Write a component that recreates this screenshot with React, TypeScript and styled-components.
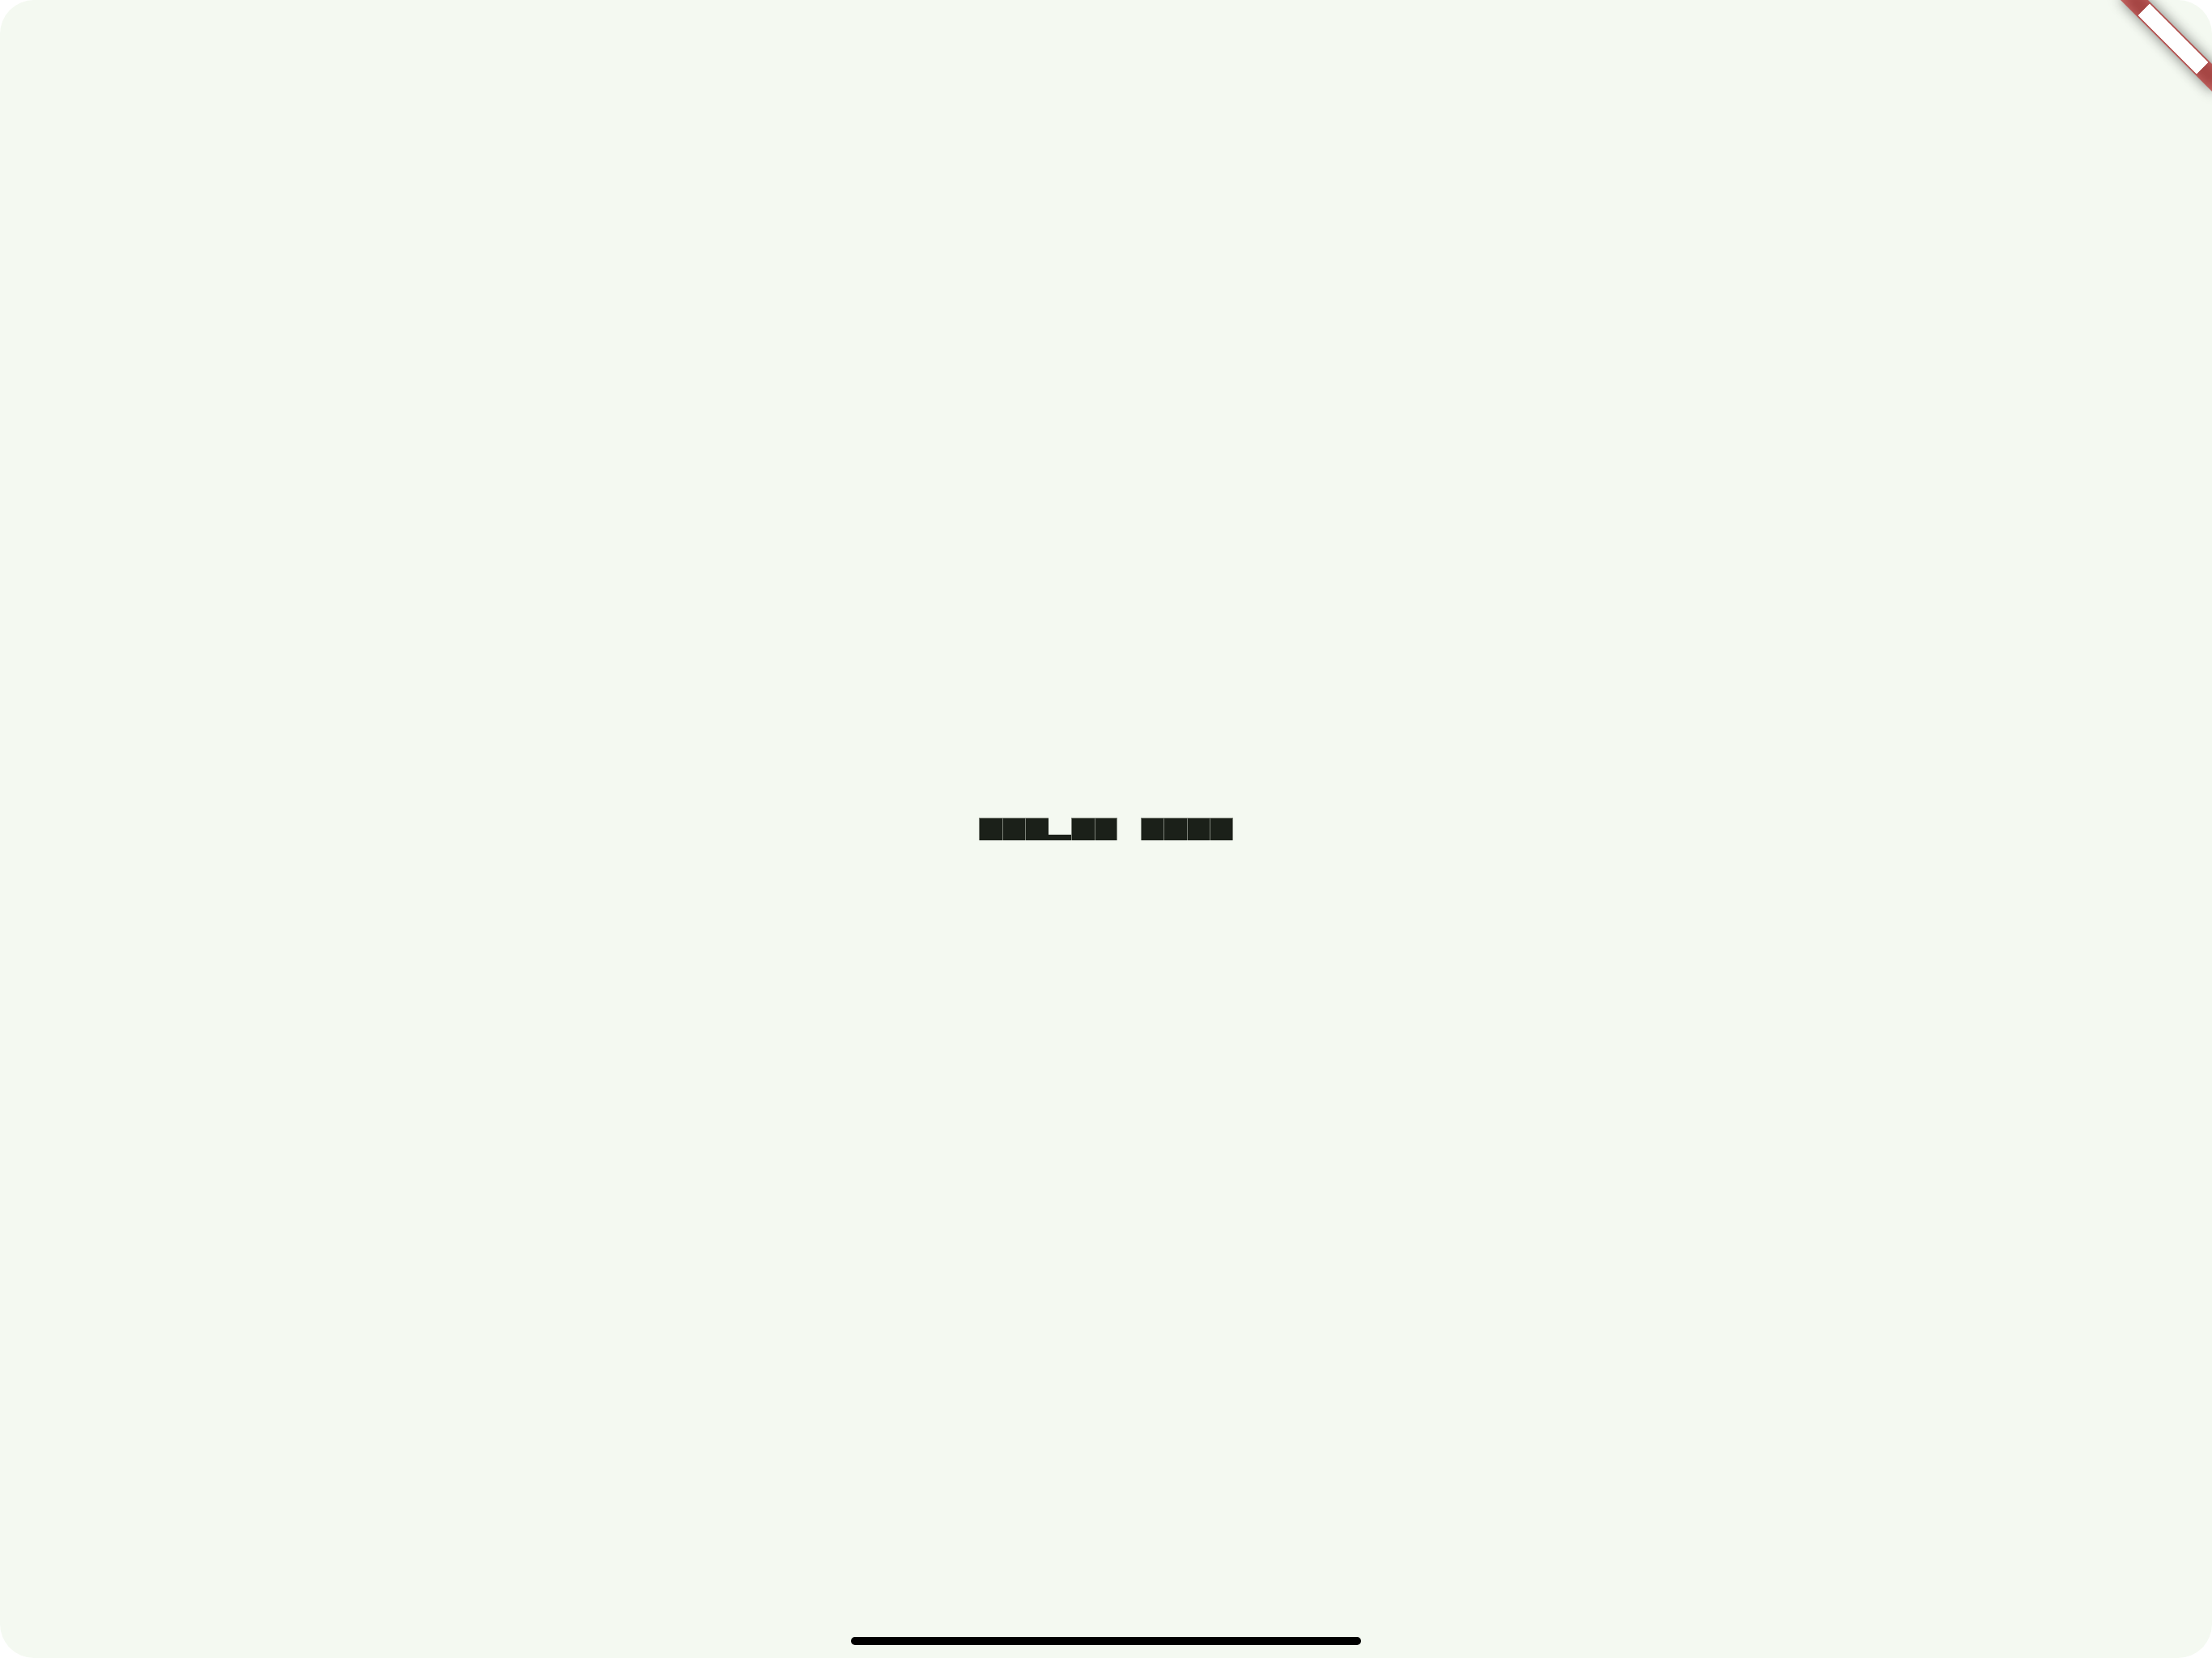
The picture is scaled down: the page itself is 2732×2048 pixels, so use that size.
import React from "react";
import styled, { createGlobalStyle, css } from "styled-components";

const GlobalStyle = createGlobalStyle`
  html, body {
    margin: 0;
    padding: 0;
    background: #ffffff;
  }
  body {
    font-family: "Liberation Sans", Arial, sans-serif;
  }
`;

const Screen = styled.div`
  position: relative;
  width: 2732px;
  height: 2048px;
  border-radius: 42px;
  overflow: hidden;
  background: #f4f9f1;
  display: flex;
  align-items: center;
  justify-content: center;
`;

const Line = styled.div<{ $size: number }>`
  display: flex;
  align-items: flex-start;
  font-size: ${(p) => p.$size}px;
  line-height: 1;
`;

const Word = styled.span<{ $tone: "dark" | "light" }>`
  display: inline-flex;
  ${(p) =>
    p.$tone === "light" &&
    css`
      background: #ffffff;
    `}
`;

const Glyph = styled.span<{ $tone: "dark" | "light"; $descender?: boolean; $space?: boolean }>`
  display: inline-flex;
  align-items: center;
  justify-content: center;
  width: 1em;
  height: 1em;
  color: transparent;
  ${(p) =>
    p.$space
      ? css`
          background: transparent;
        `
      : p.$descender
      ? css`
          background: linear-gradient(
            to bottom,
            ${p.$tone === "dark" ? "#f4f9f1" : "#ffffff"} 0,
            ${p.$tone === "dark" ? "#f4f9f1" : "#ffffff"} 75%,
            ${p.$tone === "dark" ? "#1b2019" : "#ffffff"} 75%
          );
        `
      : p.$tone === "dark"
      ? css`
          background: #1b2019;
          box-shadow: inset 1px 1px 0 0 #7c8178;
          &:last-child {
            box-shadow: inset 1px 1px 0 0 #7c8178, inset -1px 0 0 0 #7c8178;
          }
        `
      : css`
          background: #ffffff;
        `}
`;

const Char = styled.span`
  font-family: "DejaVu Sans Mono", monospace;
  font-size: 0.6em;
  line-height: 1;
  color: transparent;
`;

const Banner = styled.div`
  position: absolute;
  left: 2603.9px;
  top: 36.1px;
  width: 160px;
  height: 24px;
  transform: rotate(45deg);
  transform-origin: 50% 50%;
`;

const BannerShadow = styled.div`
  position: absolute;
  inset: 0;
  background: rgba(0, 0, 0, 0.5);
  filter: blur(7.9px);
`;

const BannerBand = styled.div`
  position: relative;
  width: 100%;
  height: 100%;
  background: rgba(183, 28, 28, 0.627);
  display: flex;
  align-items: center;
  justify-content: center;
`;

const HomeIndicator = styled.div`
  position: absolute;
  left: 50%;
  bottom: 16px;
  width: 630px;
  height: 10px;
  margin-left: -315px;
  border-radius: 5px;
  background: #000000;
`;

function TestText({ text, size, tone }: { text: string; size: number; tone: "dark" | "light" }) {
  const words = text.split(" ");
  return (
    <Line $size={size}>
      {words.map((w, wi) => (
        <React.Fragment key={wi}>
          {wi > 0 && (
            <Glyph $tone={tone} $space>
              <Char> </Char>
            </Glyph>
          )}
          <Word $tone={tone}>
            {Array.from(w).map((ch, ci) => (
              <Glyph key={ci} $tone={tone} $descender={ch === "p"}>
                <Char>{ch}</Char>
              </Glyph>
            ))}
          </Word>
        </React.Fragment>
      ))}
    </Line>
  );
}

export default function App() {
  return (
    <>
      <GlobalStyle />
      <Screen>
        <TestText text="Sample Text" size={28.55} tone="dark" />
        <Banner>
          <BannerShadow />
          <BannerBand>
            <TestText text="DEBUG" size={20.4} tone="light" />
          </BannerBand>
        </Banner>
        <HomeIndicator />
      </Screen>
    </>
  );
}
